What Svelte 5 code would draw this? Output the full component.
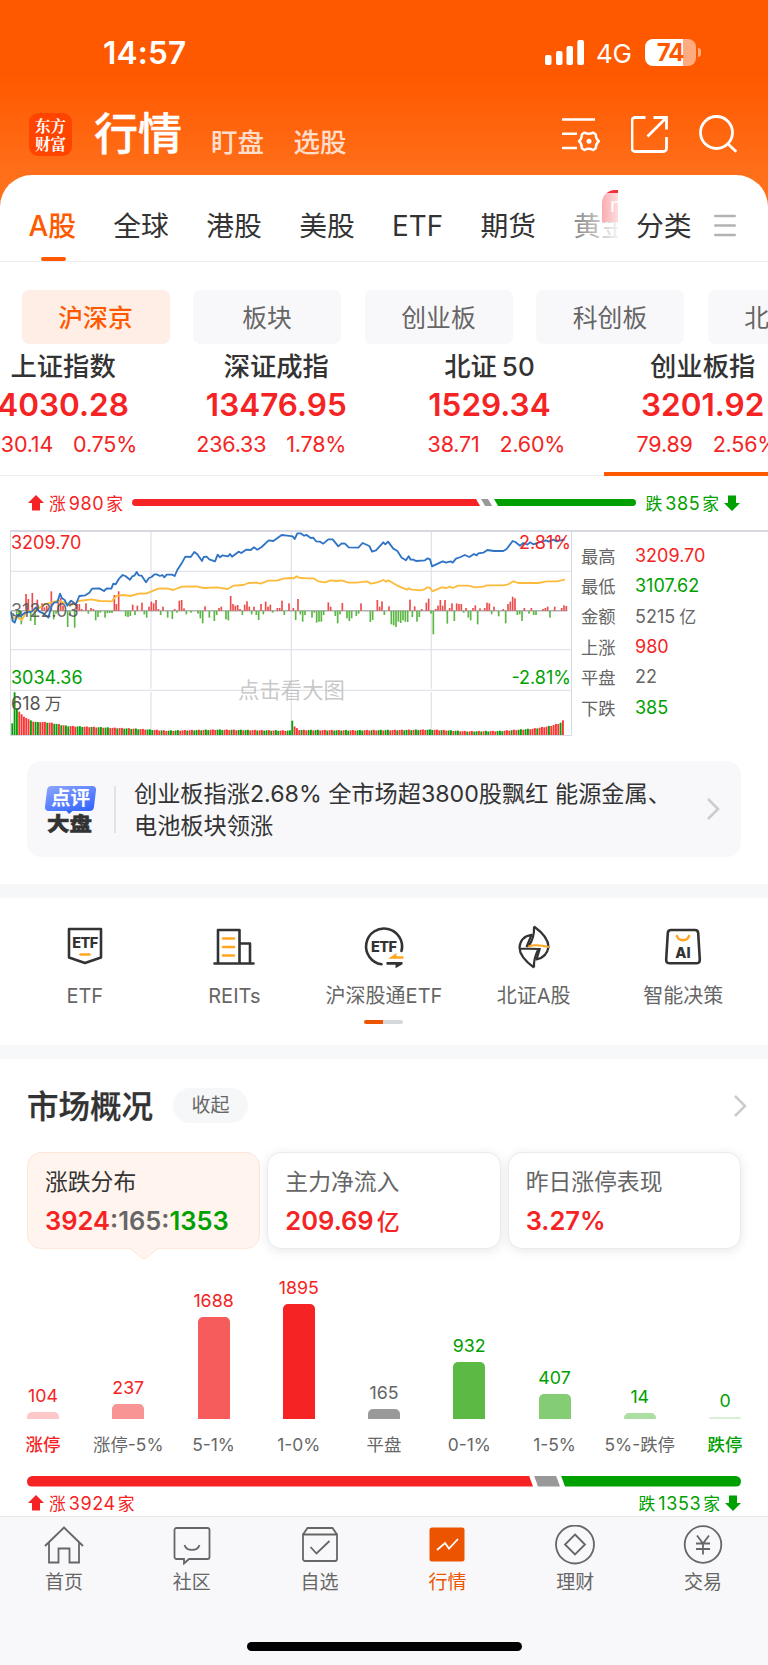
<script lang="ts">
	interface IndexQuote {
		name: string;
		value: string;
		change: string;
		percent: string;
	}

	interface Bucket {
		label: string;
		count: number;
		height: number;
		color: string;
		tone: string;
	}

	const tabs = ['A股', '全球', '港股', '美股', 'ETF', '期货', '黄金'];
	const chips = ['沪深京', '板块', '创业板', '科创板', '北交所'];

	const quotes: IndexQuote[] = [
		{ name: '上证指数', value: '4030.28', change: '30.14', percent: '0.75%' },
		{ name: '深证成指', value: '13476.95', change: '236.33', percent: '1.78%' },
		{ name: '北证50', value: '1529.34', change: '38.71', percent: '2.60%' },
		{ name: '创业板指', value: '3201.92', change: '79.89', percent: '2.56%' }
	];

	const stats = [
		{ label: '最高', value: '3209.70', tone: 'up' },
		{ label: '最低', value: '3107.62', tone: 'down' },
		{ label: '金额', value: '5215', unit: '亿', tone: 'flat' },
		{ label: '上涨', value: '980', tone: 'up' },
		{ label: '平盘', value: '22', tone: 'flat' },
		{ label: '下跌', value: '385', tone: 'down' }
	];

	const buckets: Bucket[] = [
		{ label: '涨停', count: 104, height: 6.5, color: '#fdc8c8', tone: 'up' },
		{ label: '涨停-5%', count: 237, height: 15, color: '#f99494', tone: 'up' },
		{ label: '5-1%', count: 1688, height: 102, color: '#f75c5c', tone: 'up' },
		{ label: '1-0%', count: 1895, height: 114.5, color: '#f52323', tone: 'up' },
		{ label: '平盘', count: 165, height: 10, color: '#999999', tone: 'flat' },
		{ label: '0-1%', count: 932, height: 56.5, color: '#5bb944', tone: 'down' },
		{ label: '1-5%', count: 407, height: 25, color: '#84cd74', tone: 'down' },
		{ label: '5%-跌停', count: 14, height: 6, color: '#addfa2', tone: 'down' },
		{ label: '跌停', count: 0, height: 2, color: '#d8f0d3', tone: 'down' }
	];

	// Intraday chart, three units per pixel
	const priceLine =
		'33,290 38,318 44,323 52,300 62,303 75,293 95,290 108,277 118,290 130,295 145,308 155,272 163,262 172,262 180,236 186,250 194,255 202,272 213,257 220,262 227,270 238,243 256,241 268,233 276,221 298,220 312,228 320,220 334,221 340,206 347,208 358,190 368,180 376,183 390,194 397,184 403,182 410,171 416,181 425,182 438,202 447,189 455,186 463,178 470,178 480,183 487,180 493,187 500,179 516,179 524,183 532,165 545,145 556,125 572,126 583,111 592,118 606,138 611,126 620,125 628,133 645,139 653,119 660,127 668,121 684,124 690,117 696,125 716,110 724,114 738,104 752,105 762,97 772,104 785,96 806,76 820,78 845,60 862,62 878,64 884,72 892,55 902,55 912,62 920,60 932,69 940,68 948,79 960,80 970,86 985,73 998,73 1015,94 1025,85 1035,86 1046,97 1075,98 1088,84 1108,93 1116,110 1128,106 1150,82 1156,88 1164,80 1180,101 1192,108 1205,128 1218,136 1226,124 1232,134 1240,134 1248,138 1275,136 1283,130 1290,133 1296,154 1328,139 1338,143 1352,139 1358,143 1368,131 1382,126 1394,120 1408,126 1422,117 1430,121 1435,115 1450,113 1462,105 1482,108 1510,108 1520,102 1538,78 1546,81 1560,92 1570,84 1582,89 1590,82 1600,88 1618,82 1638,76 1646,80 1660,74 1670,79 1695,73';
	const averageLine =
		'33,293 42,312 50,306 65,315 80,290 110,285 130,270 155,262 175,257 190,262 215,270 235,258 275,253 300,258 335,259 350,242 370,240 390,243 420,235 438,236 475,221 500,220 520,225 545,215 590,214 610,219 650,217 683,222 700,212 730,210 745,204 770,203 782,206 805,197 830,197 850,191 872,189 882,190 890,184 900,189 925,190 940,190 955,199 975,202 992,196 1010,198 1025,196 1045,203 1070,203 1100,199 1113,206 1132,202 1150,195 1158,200 1165,196 1190,211 1220,224 1226,220 1232,223 1260,226 1274,223 1282,217 1290,218 1297,229 1325,217 1340,219 1350,215 1358,219 1375,212 1405,212 1425,217 1450,215 1460,211 1510,211 1525,208 1540,199 1555,204 1615,204 1640,199 1670,199 1695,194';
	const momentum =
		'50:-12 57:-20 64:-40 78:50 85:35 92:-30 97:53 105:-42 112:33 126:22 133:10 140:15 154:58 161:-25 168:-8 175:25 182:38 189:15 203:-48 210:-12 224:-50 231:20 238:20 245:5 258:22 265:-8 273:8 280:5 287:-28 294:-18 301:-5 315:-20 322:-7 329:-6 336:-6 343:47 349:20 356:58 377:-16 384:-18 391:-15 398:18 405:-12 412:15 426:24 433:-10 440:-20 447:12 454:27 461:22 468:32 475:5 482:-12 489:12 503:-20 517:-24 524:5 531:-5 538:30 545:32 552:7 559:-10 573:-5 594:-8 601:-22 608:-37 615:13 628:-20 643:-30 650:-12 657:8 664:12 678:-25 685:-28 692:44 699:20 706:15 713:17 720:5 727:-12 734:18 741:28 748:12 755:-10 762:12 769:-12 776:-27 783:20 790:-10 797:27 804:12 811:18 818:-5 832:8 839:8 846:30 853:-12 867:22 880:8 887:-27 894:35 901:-10 908:-32 915:-12 936:-20 943:-5 950:-35 957:-32 964:-32 971:-12 985:25 992:12 1006:-15 1013:-37 1020:-10 1027:23 1041:-22 1048:-30 1055:-22 1069:-15 1076:-8 1083:22 1111:-33 1118:-27 1132:32 1139:12 1146:28 1153:-12 1167:13 1174:-40 1181:-43 1188:-48 1195:-32 1202:-36 1209:-28 1216:-32 1223:-33 1230:33 1237:-18 1244:13 1251:-32 1258:-18 1265:5 1279:24 1286:36 1293:-8 1300:-70 1307:5 1314:15 1321:32 1328:15 1335:32 1342:-38 1349:8 1356:22 1363:-30 1370:22 1377:20 1384:20 1391:-5 1398:8 1405:-20 1412:-28 1419:8 1426:16 1433:-40 1440:7 1454:8 1461:24 1468:22 1475:-10 1482:12 1496:-16 1510:5 1517:-37 1524:20 1531:27 1538:42 1545:37 1552:-12 1559:-10 1566:-30 1573:8 1587:-8 1594:8 1601:-12 1608:-12 1629:5 1636:8 1643:12 1650:-20 1664:12 1685:8 1692:16 1699:14'
			.split(' ')
			.map((pair) => pair.split(':').map(Number));

	const volumeKeys = [
		[36, 35], [43, 128], [50, 80], [57, 70], [64, 62], [71, 55], [99, 40], [150, 36], [200, 26], [250, 24],
		[300, 22], [400, 18], [500, 12], [650, 15], [869, 12], [876, 43], [884, 22], [898, 14], [1050, 13],
		[1200, 14], [1295, 15], [1400, 10], [1500, 11], [1600, 18], [1650, 26], [1680, 35], [1695, 48]
	];
	const volumeColors = 'grrrgrrggrggrrrgrrggrgrggrrrgg';

	function volumeAt(x: number): number {
		for (let i = 1; i < volumeKeys.length; i++) {
			const [x1, y1] = volumeKeys[i];
			const [x0, y0] = volumeKeys[i - 1];
			if (x <= x1) return y0 + ((y1 - y0) * (x - x0)) / (x1 - x0);
		}
		return 0;
	}

	const volumes = Array.from({ length: 237 }, (_, i) => {
		const x = 36 + i * 7;
		let up = volumeColors[i % volumeColors.length] === 'r';
		if (i < 3) up = false;
		else if (i < 8) up = true;
		if (i === 120) up = false;
		if (i > 226) up = i % 5 !== 0;
		return { x, up, h: volumeAt(x) + (i > 12 ? (i * 7) % 3 : 0) };
	});
</script>

<div class="app">
	<header>
		<div class="status-bar">
			<span class="clock">14:57</span>
			<svg class="signal" viewBox="0 0 39 25" fill="#fff">
				<rect x="0" y="15" width="6.5" height="10" rx="2" />
				<rect x="11" y="11" width="6.5" height="14" rx="2" />
				<rect x="21.5" y="6" width="6.5" height="19" rx="2" />
				<rect x="32.3" y="0" width="6.7" height="25" rx="2" />
			</svg>
			<span class="network">4G</span>
			<span class="battery">74</span>
			<i class="battery-cap"></i>
		</div>
		<div class="title-bar">
			<div class="logo"><span>东方</span><span>财富</span></div>
			<h1>行情</h1>
			<span class="mode">盯盘</span>
			<span class="mode">选股</span>
			<div class="actions">
				<svg width="38" height="38" viewBox="0 0 38 38" fill="none" stroke="#fff" stroke-width="2.6">
					<path d="M0 4.5h33M0 18.7h15M0 33h15" />
					<path d="M22.500 17.600Q26.800 20 31.100 17.600L33.800 19.500Q33.600 24.300 37 26.200 33.600 28.300 33.800 33.200L31.100 35Q26.800 32.600 22.500 35L19.800 33.200Q20 28.300 17 26.200 20 24.300 19.800 19.500z" stroke-width="2.4" stroke-linejoin="round" />
					<circle cx="27" cy="26.3" r="2.5" fill="#fff" stroke="none" />
				</svg>
				<svg width="38" height="38" viewBox="0 0 38 38" fill="none" stroke="#fff" stroke-width="2.8">
					<path d="M14.500 2.500H4a3 3 0 0 0-3 3v28a3 3 0 0 0 3 3h28.500a3 3 0 0 0 3-3V22M22.500 2.500h13v12M35 3 16.500 21.500" />
				</svg>
				<svg width="38" height="38" viewBox="0 0 38 38" fill="none" stroke="#fff" stroke-width="2.8">
					<circle cx="17.500" cy="17.500" r="16" />
					<path d="m28.500 28.500 8.800 8.300" />
				</svg>
			</div>
		</div>
	</header>

	<nav class="market-tabs">
		<div class="tab-scroll">
			{#each tabs as tab, i}
				<span class="tab" class:active={i === 0}>{tab}</span>
			{/each}
			<i class="fade"></i>
			<span class="new-badge">new</span>
		</div>
		<span class="category">分类</span>
		<svg width="22" height="23" viewBox="0 0 22 23" stroke="#b3b3b3" stroke-width="2.600" stroke-linecap="round">
			<path d="M1.300 2h19.400M1.300 11.500h19.400M1.300 21h19.400" />
		</svg>
	</nav>

	<div class="chips">
		{#each chips as chip, i}
			<span class="chip" class:active={i === 0}>{chip}</span>
		{/each}
	</div>

	<div class="quotes">
		{#each quotes as quote, i}
			<div class="quote" class:active={i === 3}>
				<h2>{#if quote.name === '北证50'}北证<b>50</b>{:else}{quote.name}{/if}</h2>
				<strong>{quote.value}</strong>
				<p><span>{quote.change}</span><span>{quote.percent}</span></p>
			</div>
		{/each}
	</div>

	<div class="breadth">
		<svg class="arrow" viewBox="0 0 16 16"><path d="M8 0 16 8h-4v7.500H4V8H0z" fill="#f52323" /></svg>
		<span class="up">涨<b>980</b>家</span>
		<div class="split">
			<i class="seg-up"></i><i class="seg-flat"></i><i class="seg-down"></i>
		</div>
		<span class="down">跌<b>385</b>家</span>
		<svg class="arrow" viewBox="0 0 16 16"><path d="M8 16 0 8h4V.5h8V8h4z" fill="#00a000" /></svg>
	</div>

	<section class="intraday">
		<div class="chart">
			<svg viewBox="30 45 1686 618">
				<g stroke="#e2e4ec" stroke-width="4" fill="none">
					<path d="M31 169H1714M31 404H1714M31 526H1714M453 52V521M453 531V660M874 52V521M874 531V660M1294 52V521M1294 531V660" />
					<path d="M31.500 45V661.500H1714.500V45" stroke="#d8dae2" stroke-width="3" />
				</g>
				<path d="M33 287.500H1702" stroke="#888" stroke-width="3" />
				{#each momentum as [x, v]}
					<rect x={x - 2.500} y={v > 0 ? 287 - v : 288} width="5" height={Math.abs(v)} fill={v > 0 ? '#ee4c4c' : '#5bb744'} />
				{/each}
				{#each volumes as bar}
					<rect x={bar.x - 2} y={660 - bar.h} width="5.600" height={bar.h} fill={bar.up ? '#fb3535' : '#0a9f0a'} />
				{/each}
				<polyline points={averageLine} fill="none" stroke="#fdbb3c" stroke-width="5.500" stroke-linejoin="round" />
				<polyline points={priceLine} fill="none" stroke="#2f73c4" stroke-width="5.500" stroke-linejoin="round" />
			</svg>
			<span class="mark high up">3209.70</span>
			<span class="mark base">3122.03</span>
			<span class="mark low down">3034.36</span>
			<span class="mark vol">618<em>万</em></span>
			<span class="mark high right up">2.81%</span>
			<span class="mark low right down">-2.81%</span>
			<span class="hint">点击看大图</span>
		</div>
		<dl>
			{#each stats as stat}
				<div>
					<dt>{stat.label}</dt>
					<dd class={stat.tone}>{stat.value}{#if stat.unit}<em>{stat.unit}</em>{/if}</dd>
				</div>
			{/each}
		</dl>
	</section>

	<section class="comment">
		<div class="comment-logo">
			<span class="bubble"><b>点评</b></span>
			<span class="big">大盘</span>
		</div>
		<p>创业板指涨2.68% 全市场超3800股飘红 能源金属、<br />电池板块领涨</p>
		<svg width="13" height="22" viewBox="0 0 13 22" fill="none" stroke="#ccc" stroke-width="2.600"><path d="m1 1 10 10L1 21" /></svg>
	</section>

	<section class="shortcuts">
		<div class="shortcut">
			<svg viewBox="0 0 44 44" fill="none" stroke="#333" stroke-width="2.600" stroke-linejoin="round">
				<path d="M6 4h32v28.500L22 38 6 32.500z" />
				<text x="22.300" y="23" text-anchor="middle" font-size="14.500" textLength="26">ETF</text>
				<path d="M17.500 29.500h9" stroke="#ffa51f" stroke-linecap="round" />
			</svg>
			<span>ETF</span>
		</div>
		<div class="shortcut">
			<svg viewBox="0 0 44 44" fill="none" stroke="#333" stroke-width="2.600" stroke-linejoin="round" stroke-linecap="round">
				<path d="M2.500 38.500h39M6 38V5h21.500v33M28 18.500h10V38" />
				<path d="M11 13.500h11M11 22h11M11 30.500h11" stroke="#ffa51f" />
			</svg>
			<span>REITs</span>
		</div>
		<div class="shortcut">
			<svg viewBox="0 0 44 44" fill="none" stroke="#333" stroke-width="2.600" stroke-linecap="round">
				<path d="M19.500 39.300A18 18 0 1 1 39.500 26" />
				<text x="22" y="26.500" text-anchor="middle" font-size="14.500" textLength="26">ETF</text>
				<path d="M26 33.800h15.500v-2.600h-7v-3.200z" fill="#ffa51f" stroke="none" />
				<path d="M24.500 37h16v2.200l-7 4v-3.400h-9z" fill="#333" stroke="none" />
			</svg>
			<span>沪深股通ETF</span>
		</div>
		<div class="shortcut">
			<svg viewBox="0 0 44 44" fill="none" stroke="#333" stroke-width="2.200" stroke-linejoin="round">
				<path d="M22 1.500C31 8 36.500 15 36.500 22c-1 6-5 11-12 12.500L28 23M22 1.500C22.500 9 21 15 16.500 21.500" />
				<path d="M22 42.500C13 36 7.500 29.500 7.500 22.500 8 16 12 11 19.500 9.800L14.500 22M22 42.500c-.5-7 1-12 4.500-18.500M7.500 23.500l19.500.5" />
				<path d="M16.500 21.500c6-2.300 12-1.500 20.500.500" stroke="#ffa51f" />
			</svg>
			<span>北证A股</span>
		</div>
		<div class="shortcut">
			<svg viewBox="0 0 44 44" fill="none" stroke="#333" stroke-width="2.600" stroke-linejoin="round">
				<path d="M10 5h24c2 0 3 1 3.200 3l1.600 26.500c.1 2.500-1 3.800-3.500 3.800H8.700c-2.500 0-3.600-1.300-3.500-3.800L6.800 8C7 6 8 5 10 5z" />
				<path d="M16 11c1.500 5.500 10.500 5.500 12 0" stroke="#ffa51f" stroke-linecap="round" />
				<text x="22" y="32.500" text-anchor="middle" font-size="14.500">AI</text>
			</svg>
			<span>智能决策</span>
		</div>
		<i class="pager"></i>
	</section>

	<section class="overview">
		<div class="section-head">
			<h3>市场概况</h3>
			<span class="pill">收起</span>
			<svg width="13" height="22" viewBox="0 0 13 22" fill="none" stroke="#ccc" stroke-width="2.600"><path d="m1 1 10 10L1 21" /></svg>
		</div>
		<div class="cards">
			<div class="card selected">
				<span>涨跌分布</span>
				<strong><b class="up">3924</b><b class="flat">:165:</b><b class="down">1353</b></strong>
				<svg class="pointer" viewBox="0 0 28 12"><path d="M0 0 11 9.500q3 2.500 6 0L28 0" fill="#fff4ee" stroke="#fde6da" /></svg>
			</div>
			<div class="card">
				<span>主力净流入</span>
				<strong class="up">209.69<em>亿</em></strong>
			</div>
			<div class="card">
				<span>昨日涨停表现</span>
				<strong class="up">3.27%</strong>
			</div>
		</div>
		<div class="distribution">
			{#each buckets as bucket}
				<div class="bucket">
					<span class="count {bucket.tone}">{bucket.count}</span>
					<i style="height: {bucket.height}px; background: {bucket.color}"></i>
					<span class="range" class:up={bucket.label === '涨停'} class:down={bucket.label === '跌停'}>{bucket.label}</span>
				</div>
			{/each}
		</div>
		<div class="split wide">
			<i class="seg-up"></i><i class="seg-flat"></i><i class="seg-down"></i>
		</div>
		<div class="totals">
			<svg class="arrow" viewBox="0 0 16 16"><path d="M8 0 16 8h-4v7.500H4V8H0z" fill="#f52323" /></svg>
			<span class="up">涨<b>3924</b>家</span>
			<span class="down">跌<b>1353</b>家</span>
			<svg class="arrow" viewBox="0 0 16 16"><path d="M8 16 0 8h4V.5h8V8h4z" fill="#00a000" /></svg>
		</div>
	</section>

	<footer>
		<nav class="bottom-nav">
			<a href="#home">
				<svg viewBox="0 0 40 40"><path d="M1 21 20 2.500 39 21M5 17.500V37.500h9.500V23.500h11v14H35V17.500" /></svg>
				首页
			</a>
			<a href="#community">
				<svg viewBox="0 0 40 40"><path d="M4.500 3h31a2 2 0 0 1 2 2v27a2 2 0 0 1-2 2H17l-5 4.500V34H4.500a2 2 0 0 1-2-2V5a2 2 0 0 1 2-2zM12.500 20c2 6.500 13 6.500 15 0" /></svg>
				社区
			</a>
			<a href="#watchlist">
				<svg viewBox="0 0 40 40"><path d="M3 9.500h34V34a2 2 0 0 1-2 2H5a2 2 0 0 1-2-2zM3 9.500 7.500 3h25L37 9.500M10.500 22l6 6.500L29.500 16" /></svg>
				自选
			</a>
			<a href="#market" class="active">
				<svg viewBox="0 0 40 40"><rect x="2.500" y="2.500" width="35" height="34" rx="2.500" fill="#ed5400" stroke="none" /><path d="m10 25 8-7 4 5.500 9-9.500" stroke="#fff" /></svg>
				行情
			</a>
			<a href="#wealth">
				<svg viewBox="0 0 40 40"><circle cx="20" cy="19.500" r="19" /><path d="M20 9.500 30 19.500l-10 10-10-10z" /></svg>
				理财
			</a>
			<a href="#trade">
				<svg viewBox="0 0 40 40"><circle cx="20" cy="19.500" r="18.300" /><path d="m14 10.500 6 8 6-8M20 18.500V29.500M13 18.500h14M13 24h14" /></svg>
				交易
			</a>
		</nav>
		<i class="home-indicator"></i>
	</footer>
</div>

<style>
	:global(body) {
		margin: 0;
		background: #fff;
	}

	.app {
		width: 768px;
		height: 1665px;
		overflow: hidden;
		display: flex;
		flex-direction: column;
		background: #fff;
		color: #333;
		font-family: Inter, 'Noto Sans CJK SC', sans-serif;
	}

	.app * {
		box-sizing: border-box;
	}

	h1, h2, h3, p, dl, dd {
		margin: 0;
	}

	em, i {
		font-style: normal;
	}

	svg {
		display: block;
		flex: none;
	}

	.up {
		color: #f52323;
	}

	.down {
		color: #00a000;
	}

	.flat {
		color: #666;
	}

	header {
		height: 215px;
		flex: none;
		background: linear-gradient(#ff5900 0, #ff5900 75px, #ff701b 180px);
		color: #fff;
	}

	.status-bar {
		height: 104px;
		display: flex;
		align-items: center;
		padding-left: 103px;
	}

	.clock {
		width: 442px;
		font-size: 31.500px;
		font-weight: 600;
		letter-spacing: 0.2px;
	}

	.signal {
		width: 39px;
		height: 25px;
		margin-right: 12px;
	}

	.network {
		width: 49px;
		font-size: 26px;
		letter-spacing: -0.3px;
		padding-top: 2px;
	}

	.battery {
		width: 51px;
		height: 27px;
		padding-right: 1px;
		border-radius: 8px;
		background: linear-gradient(90deg, #fff 38px, #ffab80 38px);
		color: #ff5900;
		font-size: 24px;
		line-height: 28px;
		font-weight: 700;
		letter-spacing: -1.200px;
		text-align: center;
	}

	.battery-cap {
		width: 3px;
		height: 9px;
		margin-left: 2px;
		border-radius: 0 4px 4px 0;
		background: #ffab80;
	}

	.title-bar {
		display: flex;
		height: 60px;
		padding: 0 31px 0 29px;
	}

	.logo {
		width: 43px;
		height: 43px;
		margin-top: 9px;
		padding-top: 3px;
		border-radius: 9px;
		background: #ff4400;
		display: flex;
		flex-direction: column;
		align-items: center;
		font-family: 'Noto Serif CJK SC', 'Noto Sans CJK SC', serif;
		font-size: 15.500px;
		line-height: 18px;
		font-weight: 700;
	}

	h1 {
		margin: 0 29px 0 22px;
		font-size: 44px;
		line-height: 61px;
		font-weight: 500;
		-webkit-text-stroke: 0.4px #fff;
	}

	.mode {
		margin-right: 29.500px;
		padding-top: 19px;
		font-size: 26.500px;
		line-height: 38px;
		font-weight: 500;
		color: rgba(255, 255, 255, 0.8);
	}

	.actions {
		margin: 11px 0 0 auto;
		display: flex;
		gap: 30.500px;
	}

	.market-tabs {
		position: relative;
		height: 87px;
		margin-top: -40px;
		flex: none;
		border-radius: 32px 32px 0 0;
		border-bottom: 1px solid #ececee;
		background: #fff;
		display: flex;
		align-items: center;
	}

	.market-tabs > svg {
		margin: 14px 0 0 22px;
	}

	.tab-scroll {
		position: relative;
		width: 618px;
		height: 87px;
		padding: 31px 0 0 28.500px;
		overflow: hidden;
		display: flex;
		gap: 37.300px;
		white-space: nowrap;
	}

	.tab,
	.category {
		font-size: 27.800px;
		line-height: 41px;
	}

	.tab {
		position: relative;
		height: 56px;
	}

	.tab.active {
		color: #ff5900;
		font-weight: 500;
	}

	.tab.active::after {
		content: '';
		position: absolute;
		left: 12px;
		bottom: 1px;
		width: 25px;
		height: 4px;
		border-radius: 2px;
		background: #ff5900;
	}

	.category {
		margin: 16px 0 0 18px;
	}

	.new-badge {
		position: absolute;
		left: 602px;
		top: 15px;
		width: 50px;
		height: 32px;
		padding-left: 8px;
		border-radius: 13px 13px 13px 0;
		background: linear-gradient(90deg, rgba(255, 255, 255, 0.6), rgba(255, 255, 255, 0.85) 17px) 0 3px / 100% 100% no-repeat #f2303a;
		color: #fff;
		font-size: 20px;
		line-height: 31px;
	}

	.fade {
		position: absolute;
		left: 566px;
		top: 18px;
		width: 52px;
		height: 60px;
		background: linear-gradient(90deg, rgba(255, 255, 255, 0.3), rgba(255, 255, 255, 0.95));
	}

	.chips {
		display: flex;
		flex: none;
		gap: 23.500px;
		padding: 28px 0 0 21.500px;
	}

	.chip {
		flex: none;
		width: 148px;
		height: 54px;
		border-radius: 7px;
		background: #f8f8fa;
		color: #666;
		font-size: 24.800px;
		line-height: 57px;
		text-align: center;
	}

	.chip.active {
		background: #ffeee6;
		color: #ff5900;
		font-weight: 500;
	}

	.quotes {
		display: flex;
		flex: none;
		height: 132px;
		margin-left: -43.500px;
		border-bottom: 1px solid #efeff1;
	}

	.quote {
		position: relative;
		flex: none;
		width: 213.200px;
		display: flex;
		flex-direction: column;
		align-items: center;
	}

	.quote.active::after {
		content: '';
		position: absolute;
		left: 8px;
		bottom: -1px;
		width: 198px;
		height: 4px;
		background: #ff5900;
	}

	h2 {
		height: 44px;
		font-size: 26.300px;
		line-height: 46px;
		font-weight: 500;
	}

	h2 b {
		margin-left: 5px;
		font-size: 26px;
		font-weight: 500;
	}

	.quote strong {
		height: 34px;
		font-size: 31.500px;
		line-height: 34px;
		font-weight: 600;
		color: #f52323;
	}

	.quote p {
		display: flex;
		gap: 20px;
		width: 100%;
		margin-top: 6px;
		font-size: 21.500px;
		line-height: 32px;
		letter-spacing: -0.2px;
		color: #f52323;
	}

	.quote p span {
		flex: 1;
	}

	.quote p span:first-child {
		text-align: right;
	}

	.breadth {
		display: flex;
		flex: none;
		align-items: center;
		height: 54px;
		padding: 0 28px;
		font-size: 16.800px;
	}

	.breadth > span,
	.totals > span {
		white-space: nowrap;
		margin: 0 5px;
	}

	.breadth b,
	.totals b {
		margin: 0 2px 0 3px;
		font-size: 18px;
		font-weight: 400;
		letter-spacing: 0.6px;
	}

	.arrow {
		width: 16px;
		height: 16px;
	}

	.split {
		flex: 1;
		height: 7px;
		margin: 0 4px 0 4px;
		border-radius: 4px;
		overflow: hidden;
		display: flex;
	}

	.breadth .split {
		margin-top: -1px;
	}

	.split i {
		height: 100%;
	}

	.seg-up {
		width: 348px;
		margin-right: 1px;
		background: #f52323;
		clip-path: polygon(0 0, calc(100% - 4px) 0, 100% 100%, 0 100%);
	}

	.seg-flat {
		width: 11px;
		margin-right: 2px;
		background: #999;
		clip-path: polygon(0 0, calc(100% - 4px) 0, 100% 100%, 4px 100%);
	}

	.seg-down {
		flex: 1;
		background: #00a000;
		clip-path: polygon(0 0, 100% 0, 100% 100%, 4px 100%);
	}

	.intraday {
		display: flex;
		flex: none;
		height: 206px;
		margin-left: 10px;
		border-top: 2px solid #d8d9e0;
	}

	.chart {
		position: relative;
		width: 562px;
		height: 206px;
		margin-top: -2px;
	}

	.chart svg {
		width: 562px;
		height: 206px;
	}

	.mark {
		position: absolute;
		left: 1px;
		font-size: 18px;
		line-height: 20px;
	}

	.mark.high {
		top: 3px;
	}

	.mark.base {
		top: 71px;
		color: rgba(80, 80, 80, 0.85);
	}

	.mark.low {
		top: 138px;
	}

	.mark.vol {
		top: 164px;
		color: #555;
	}

	.mark em,
	dd em {
		margin-left: 4px;
		font-size: 17px;
	}

	.mark.right {
		left: auto;
		right: 1px;
	}

	.hint {
		position: absolute;
		left: 228px;
		top: 145px;
		font-size: 21.400px;
		line-height: 30px;
		color: rgba(170, 170, 170, 0.65);
	}

	dl {
		padding: 8px 0 0 9px;
		font-size: 18px;
	}

	dl div {
		display: flex;
		height: 30.400px;
		align-items: center;
	}

	dt {
		width: 54px;
		font-size: 17.300px;
		color: #666;
	}

	.comment {
		display: flex;
		flex: none;
		align-items: center;
		height: 96px;
		margin: 25px 27px 0;
		padding: 0 21px 0 18px;
		border-radius: 14px;
		background: #f8f8fa;
	}

	.comment-logo {
		width: 71px;
		height: 47px;
		margin-right: 18px;
		border-right: 2px solid #e2e2e5;
	}

	.bubble {
		position: relative;
		display: block;
		width: 49px;
		height: 25px;
		margin-left: 1px;
		border-radius: 4px;
		transform: skewX(-7deg);
		background: linear-gradient(160deg, #8ba4ff, #2f63ff);
		color: #fff;
		text-align: center;
		line-height: 25px;
	}

	.bubble::after {
		content: '';
		position: absolute;
		left: 22px;
		top: 25px;
		border: 3px solid transparent;
		border-top-color: #2f63ff;
	}

	.bubble b {
		display: block;
		font-size: 19.500px;
		font-weight: 700;
		transform: skewX(7deg);
	}

	.big {
		display: block;
		margin-left: 2px;
		font-size: 22.500px;
		line-height: 25px;
		font-weight: 900;
		white-space: nowrap;
		transform: scaleY(0.88);
		-webkit-text-stroke: 0.6px #333;
	}

	.comment p {
		flex: 1;
		padding-top: 1px;
		font-size: 23.200px;
		line-height: 32px;
		white-space: nowrap;
	}

	.shortcuts {
		position: relative;
		display: flex;
		flex: none;
		height: 175px;
		margin-top: 27px;
		padding: 27px 10px 0;
		border-top: 14px solid #f6f7f9;
		border-bottom: 14px solid #f6f8f9;
	}

	.shortcut {
		flex: 1;
		display: flex;
		flex-direction: column;
		align-items: center;
		font-size: 20px;
		line-height: 30px;
		color: #666;
		white-space: nowrap;
	}

	.shortcut svg {
		width: 44px;
		height: 44px;
		margin-bottom: 12px;
		overflow: visible;
	}

	.shortcut text {
		fill: #333;
		stroke: none;
		font-weight: 800;
	}

	.pager {
		position: absolute;
		left: 364px;
		top: 122px;
		width: 39px;
		height: 4px;
		border-radius: 2px;
		background: linear-gradient(90deg, #ed5400 50%, #d4d7dc 50%);
	}

	.overview {
		display: flex;
		flex: none;
		flex-direction: column;
		height: 457px;
		padding: 0 27px;
	}

	.section-head {
		display: flex;
		flex: none;
		align-items: center;
		height: 93px;
	}

	.section-head svg {
		margin: 1px -6px 0 auto;
	}

	h3 {
		margin-top: -4px;
		font-size: 31.500px;
		font-weight: 500;
		-webkit-text-stroke: 0.3px #333;
	}

	.pill {
		width: 75px;
		height: 35px;
		margin-left: 20px;
		border-radius: 18px;
		background: #f6f7f9;
		font-size: 19px;
		line-height: 36px;
		text-align: center;
		color: #666;
	}

	.cards {
		display: flex;
		flex: none;
		gap: 7px;
		height: 97px;
	}

	.card {
		position: relative;
		flex: 1;
		padding: 12px 0 0 17px;
		border: 1px solid #ebebed;
		border-radius: 14px;
		background: #fff;
		box-shadow: 0 2px 12px rgba(0, 0, 0, 0.09);
		color: #666;
		font-size: 22.800px;
		line-height: 33px;
		white-space: nowrap;
	}

	.card.selected {
		border-color: #fde6da;
		background: #fff4ee;
		box-shadow: none;
		color: #333;
	}

	.card strong {
		display: block;
		margin-top: 6px;
		font-size: 25.500px;
		font-weight: 600;
	}

	.card strong b {
		font-weight: 600;
	}

	.card em {
		margin-left: 3px;
		font-size: 23px;
		font-weight: 500;
	}

	.pointer {
		position: absolute;
		left: 102px;
		top: 95px;
		width: 28px;
		height: 12px;
	}

	.distribution {
		display: flex;
		flex: none;
		justify-content: space-between;
		height: 210.500px;
	}

	.bucket {
		width: 32px;
		display: flex;
		flex-direction: column;
		align-items: center;
		justify-content: flex-end;
		white-space: nowrap;
	}

	.bucket i {
		flex: none;
		width: 32px;
		border-radius: 5px 5px 0 0;
	}

	.count {
		font-size: 17.800px;
		line-height: 22px;
		margin-bottom: 5px;
	}

	.range {
		padding-top: 11px;
		height: 41px;
		font-size: 17.400px;
		line-height: 30px;
		color: #666;
	}

	.range.up {
		color: #f52323;
		font-weight: 500;
	}

	.range.down {
		color: #00a000;
		font-weight: 500;
	}

	.split.wide {
		flex: none;
		height: 11px;
		margin: 16px 0 0;
		border-radius: 6px;
	}

	.wide .seg-up {
		width: 506px;
	}

	.wide .seg-flat {
		width: 26px;
		margin-right: 1px;
	}

	.totals {
		display: flex;
		flex: none;
		align-items: center;
		height: 32px;
		padding: 1px 0 0 1px;
		font-size: 16.800px;
	}

	.totals .down {
		margin-left: auto;
	}

	footer {
		flex: none;
		height: 149px;
		border-top: 1px solid #e6e6e9;
		background: #f8f8fa;
		display: flex;
		flex-direction: column;
		align-items: center;
		justify-content: space-between;
	}

	.bottom-nav {
		display: flex;
		width: 768px;
		padding-right: 1px;
	}

	.bottom-nav a {
		flex: 1;
		display: flex;
		flex-direction: column;
		align-items: center;
		padding-top: 8px;
		font-size: 19px;
		line-height: 28px;
		color: #666;
		text-decoration: none;
	}

	.bottom-nav svg {
		width: 40px;
		height: 40px;
		margin-bottom: 4px;
		fill: none;
		stroke: #666;
		stroke-width: 1.800;
	}

	.bottom-nav .active {
		color: #ed5400;
	}

	.home-indicator {
		width: 275px;
		height: 9px;
		margin-bottom: 14px;
		border-radius: 5px;
		background: #000;
	}
</style>
